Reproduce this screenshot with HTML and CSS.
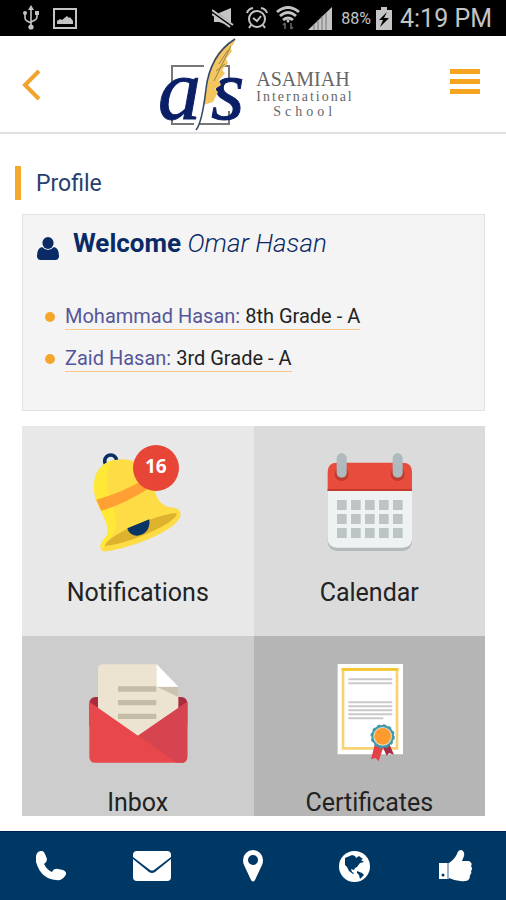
FILE: index.html
```html
<!DOCTYPE html>
<html lang="en">
<head>
  <meta charset="UTF-8">
  <meta name="viewport" content="width=device-width, initial-scale=1.0">
  <title>Asamiah International School</title>
  <link rel="stylesheet" href="styles.css">
</head>
<body>

<div class="status">
  <div class="status-left">
    <svg width="18" height="26" viewBox="0 0 18 26" fill="none" stroke="currentColor" stroke-width="1.6">
      <path d="M9 3v19M3 9v4q0 2 2 3l4 2M15 8v4q0 2-2 3l-4 2"/>
      <path d="M9 0l3 5H6zM13 6h4v4h-4z" fill="currentColor" stroke="none"/>
      <circle cx="3" cy="8" r="2" fill="currentColor" stroke="none"/>
      <circle cx="9" cy="22" r="2.6" fill="currentColor" stroke="none"/>
    </svg>
    <svg width="24" height="21" viewBox="0 0 24 21">
      <path d="M1 1h22v19H1z" fill="none" stroke="currentColor" stroke-width="2"/>
      <path d="M4 16v-3l3-2 2 1 5-4 2 2 1-1 3 4v3z" fill="currentColor"/>
    </svg>
  </div>
  <div class="status-right">
    <svg class="mute" width="22" height="20" viewBox="0 0 22 20">
      <path d="M2 5h5l12-5v18L7 14H2z" fill="currentColor"/>
      <path d="M0 3l20 15" stroke="#000" stroke-width="4"/>
      <path d="M0 2l21 15M0 6l18 13" stroke="currentColor" stroke-width="2"/>
    </svg>
    <svg width="22" height="22" viewBox="0 0 22 22" fill="none" stroke="currentColor" stroke-width="2">
      <circle cx="11" cy="12" r="8"/>
      <path d="M7 11l4 3 4-5M1 6q1-4 6-5M21 6q-1-4-6-5M5 18l-2 3M17 18l2 3"/>
    </svg>
    <svg width="24" height="24" viewBox="0 0 24 24" fill="none" stroke="currentColor" stroke-width="2.8">
      <path d="M1 6q11-9 22 0M4 10q8-7 16 0M7 14q5-4 10 0"/>
      <circle cx="12" cy="15" r="1.5" fill="currentColor" stroke="none"/>
      <path d="M9 23v-6M7 19l2-2M15 17v6M17 21l-2 2" stroke="#666" stroke-width="1.6"/>
    </svg>
    <svg width="25" height="23" viewBox="0 0 25 23">
      <path d="M0 23L24 0v23z" fill="currentColor"/>
      <path d="M6 17v6M10 13v10M14 9v14M18 6v17" stroke="#777" stroke-width="1"/>
    </svg>
    <span class="percent">88%</span>
    <svg width="16" height="23" viewBox="0 0 16 23">
      <path d="M0 3h5V0h6v3h5v20H0z" fill="currentColor"/>
      <path d="M11 5L3 13h4l-3 7 9-9H8z" fill="#000"/>
    </svg>
    <span class="clock">4:19 PM</span>
  </div>
</div>

<header class="header">
  <a class="back" href="#" aria-label="Back">
    <svg width="20" height="32" viewBox="0 0 20 32"><path d="M17 2L3 16l14 14" fill="none" stroke="currentColor" stroke-width="4"/></svg>
  </a>
  <div class="logo">
    <svg class="logo-mark" width="92" height="92" viewBox="0 0 92 92">
      <path d="M16 44V27h32M64 27h9v14M73 72v13H43M38 85H16v-5" fill="none" stroke="#777" stroke-width="2"/>
      <text x="2" y="80" class="logo-letter">a</text>
      <text x="55" y="80" class="logo-letter">s</text>
      <path d="M78 0Q58 12 54 33L47 66l10-3 5-10-3-3 6-4-2-5 6-7-3-3 6-7-2-4 6-8-2-4q5-3 5-8z" fill="#f3c65f"/>
      <path d="M79 0Q54 16 50 50T40 91" fill="none" stroke="#364a68" stroke-width="1.6"/>
      <path d="M75 7L58 42M72 11l-9 14M69 25l-9 7" fill="none" stroke="#9b8350" stroke-width="1"/>
    </svg>
    <div class="logo-text">
      <span class="logo-name">ASAMIAH</span>
      <span class="logo-inter">International</span>
      <span class="logo-school">School</span>
    </div>
  </div>
  <button class="menu" type="button" aria-label="Menu"><span></span><span></span><span></span></button>
</header>

<main class="content">
  <h1 class="section-title">Profile</h1>

  <section class="profile">
    <h2 class="welcome">
      <svg width="22" height="23" viewBox="0 0 22 23" fill="currentColor">
        <ellipse cx="11" cy="6" rx="5.6" ry="6"/>
        <path d="M5 10q6 6 12 0 5 1 5 9 0 4-4 4H4q-4 0-4-4 0-8 5-9z"/>
      </svg>
      <span><strong>Welcome</strong> <em>Omar Hasan</em></span>
    </h2>
    <ul class="children">
      <li><a href="#"><span>Mohammad Hasan:</span> 8th Grade - A</a></li>
      <li><a href="#"><span>Zaid Hasan:</span> 3rd Grade - A</a></li>
    </ul>
  </section>

  <nav class="tiles">
    <a class="tile tile-notifications" href="#">
      <span class="tile-icon">
        <svg width="120" height="110" viewBox="54 45 360 330">
          <circle cx="152" cy="93" r="18" fill="none" stroke="#092e64" stroke-width="11"/>
          <path d="M102 175C101 120 130 90 185 88C240 88 268 125 279 165C288 200 298 230 340 233C358 234 367 250 359 264C338 305 220 352 140 364C123 366 117 352 124 338C136 322 149 315 147 292C143 250 104 235 102 175Z" fill="#fddc45"/>
          <path d="M102 175C101 130 125 98 160 90C143 112 138 140 144 180C150 235 182 265 160 307C150 330 130 340 132 357C117 353 121 338 134 325C165 287 104 240 102 175Z" fill="#ffe936"/>
          <path d="M109 209Q180 190 250 150L272 171Q200 220 124 242Z" fill="#ff9f34"/>
          <path d="M134 348C143 310 320 244 350 250C354 279 192 347 134 348Z" fill="#dfb22d"/>
          <path d="M202 295L268 268C275 322 211 332 202 295Z" fill="#093564"/>
        </svg>
        <span class="badge">16</span>
      </span>
      <span class="tile-label">Notifications</span>
    </a>
    <a class="tile tile-calendar" href="#">
      <span class="tile-icon">
        <svg width="120" height="110" viewBox="28 45 360 330">
          <rect x="84" y="150" width="253" height="213" rx="28" fill="#b3b9bd"/>
          <path d="M84 180h253v145q0 28-28 28H112q-28 0-28-28z" fill="#eef2f3"/>
          <path d="M84 183v-57q0-28 28-28h197q28 0 28 28v57z" fill="#e84c3d"/>
          <path d="M84 177h253v6H84z" fill="#c43c30"/>
          <circle cx="126" cy="132" r="21" fill="#bf3c30"/>
          <circle cx="294" cy="132" r="21" fill="#bf3c30"/>
          <rect x="111" y="70" width="30" height="73" rx="15" fill="#aebabd"/>
          <rect x="279" y="70" width="30" height="73" rx="15" fill="#aebabd"/>
          <path d="M112 225h198M112 267h198M112 309h198" stroke="#bdc4c6" stroke-width="30" stroke-dasharray="29 13"/>
        </svg>
      </span>
      <span class="tile-label">Calendar</span>
    </a>
    <a class="tile tile-inbox" href="#">
      <span class="tile-icon">
        <svg width="120" height="110" viewBox="54 45 360 330">
          <rect x="88" y="171" width="294" height="100" rx="18" fill="#a92d3c"/>
          <path d="M114 88q0-15 15-15h161l65 67v150H114z" fill="#ece4d1"/>
          <path d="M290 140h65v31z" fill="#cbc3b0"/>
          <path d="M290 73l65 67h-65z" fill="#fff"/>
          <path d="M174 147h115M174 188h115M174 229h115" stroke="#c5bca7" stroke-width="16"/>
          <path d="M88 185l146 102 148-102v165q0 18-18 18H106q-18 0-18-18z" fill="#e8474b"/>
          <path d="M234 287l148-102v165q0 18-18 18h-15z" fill="#d64450"/>
        </svg>
      </span>
      <span class="tile-label">Inbox</span>
    </a>
    <a class="tile tile-certificates" href="#">
      <span class="tile-icon">
        <svg width="120" height="110" viewBox="28 45 360 330">
          <path d="M114 72h196v271H114z" fill="#fff"/>
          <path d="M130 88h162v237H130z" fill="none" stroke="#f9d273" stroke-width="8"/>
          <path d="M126 88h170" stroke="#f5c52e" stroke-width="8"/>
          <path d="M146 118h132M146 130h132M146 187h132M146 199h132M146 211h132M146 223h132M146 235h105" stroke="#c9c9cc" stroke-width="6"/>
          <path d="M225 315l-11 43 14-4 9 10 16-48z" fill="#e34348"/>
          <path d="M248 318l13 29 7-8 15 5-14-32z" fill="#a92d49"/>
          <circle cx="249" cy="289" r="31" fill="#e8dfbf" stroke="#3a9aae" stroke-width="6"/>
          <circle cx="249" cy="289" r="34" fill="none" stroke="#3a9aae" stroke-width="5" stroke-dasharray="9 8.8"/>
          <circle cx="249" cy="289" r="25" fill="#ff9b2e"/>
        </svg>
      </span>
      <span class="tile-label">Certificates</span>
    </a>
  </nav>
</main>

<footer class="footer">
  <a href="#" aria-label="Call">
    <svg width="30" height="30" viewBox="0 0 30 30"><path d="M2 1Q7-2 9 3l2 5q0 3-3 5 3 6 8 8 2-4 6-3l5 1q5 2 2 6-3 5-9 4Q5 28 0 11-1 4 2 1z"/></svg>
  </a>
  <a href="#" aria-label="Email">
    <svg width="38" height="30" viewBox="0 0 38 30"><path d="M4 0h30q4 0 4 4v2L21 19q-2 1-4 0L0 6V4q0-4 4-4z"/><path d="M0 8l16 13q3 2 6 0L38 8v18q0 4-4 4H4q-4 0-4-4z"/></svg>
  </a>
  <a href="#" aria-label="Location">
    <svg width="20" height="32" viewBox="0 0 20 32"><path d="M10 0a10 10 0 0 1 10 10q0 3-1 5l-7 15q-2 3-4 0L1 15q-1-2-1-5A10 10 0 0 1 10 0zm0 5a5 5 0 1 0 0 10 5 5 0 0 0 0-10z" fill-rule="evenodd"/></svg>
  </a>
  <a href="#" aria-label="Website">
    <svg width="31" height="31" viewBox="0 0 31 31"><circle cx="15.500" cy="15.500" r="15.500"/><path class="land" d="M6 7l7-3 3 1 1 2 3-2 4 3-2 1 3 2-4 1-3 4-2 1-1 2-3-1 1 3 2 1-1 1-4-3-2-4-2-2zM18 20l5 2 2 2-4 4-1-4-2-2z"/></svg>
  </a>
  <a href="#" aria-label="Like">
    <svg width="33" height="32" viewBox="0 0 33 32"><path d="M0 13h8v16H0zM10 13q5-3 8-9 1-4 4-4 4 1 3 6l-2 5h7q4 2 2 5 2 3 0 5 1 3-1 4 0 6-5 6-8 1-16-3z"/><path class="cuff" d="M9 13v16"/><circle class="land" cx="4" cy="25" r="1.5"/></svg>
  </a>
</footer>

</body>
</html>
```
FILE: styles.css
```css
* {
  box-sizing: border-box;
}
body {
  font-family: Roboto, sans-serif;
  margin: 0;
  height: 100vh;
  display: flex;
  flex-direction: column;
  background-color: #fff;
  color: #222;
}
a {
  color: inherit;
  text-decoration: none;
}
svg {
  display: block;
  flex: none;
}

/* Status bar */
.status {
  flex: none;
  height: 36px;
  padding: 0 14px 0 22px;
  display: flex;
  justify-content: space-between;
  align-items: center;
  background-color: #000;
  color: #c4c4c4;
}
.status-left {
  display: flex;
  align-items: center;
  gap: 13px;
}
.status-right {
  display: flex;
  align-items: center;
  gap: 8px;
}
.mute {
  margin-right: 4px;
}
.percent {
  font-size: 16px;
  margin-right: -3px;
}
.clock {
  font-size: 25px;
}

/* Header */
.header {
  flex: none;
  height: 98px;
  padding: 2px 26px 0 22px;
  display: grid;
  grid-template-columns: 1fr auto 1fr;
  align-items: center;
  border-bottom: 2px solid #e0e0e0;
}
.back {
  color: #f2a32b;
  justify-self: start;
}
.menu {
  justify-self: end;
  width: 30px;
  padding: 0;
  border: none;
  background: none;
  display: flex;
  flex-direction: column;
  gap: 5px;
  cursor: pointer;
  margin-bottom: 8px;
}
.menu span {
  height: 5px;
  background-color: #f4a41f;
}
.logo {
  display: flex;
  align-items: center;
  gap: 8px;
  padding-left: 8px;
}
.logo-mark {
  overflow: visible;
}
.logo-letter {
  font-family: "Liberation Serif", serif;
  font-style: italic;
  font-size: 86px;
  fill: #0a1f66;
  stroke: #0a1f66;
  stroke-width: 1px;
}
.logo-text {
  font-family: "Liberation Serif", serif;
  color: #666;
  display: flex;
  flex-direction: column;
  font-size: 14px;
  line-height: 15px;
  padding-top: 18px;
}
.logo-name {
  font-size: 20px;
  line-height: 19px;
}
.logo-inter {
  letter-spacing: 2px;
}
.logo-school {
  letter-spacing: 4px;
  padding-left: 17px;
}

/* Content */
.content {
  flex: 1;
  min-height: 0;
  overflow-y: auto;
  scrollbar-width: none;
  padding: 32px 21px 0 22px;
  margin-bottom: 15px;
}
.section-title {
  margin: 0 0 14px -7px;
  padding: 2px 0 0 15px;
  border-left: 6px solid #f4a92a;
  font-size: 23px;
  font-weight: normal;
  line-height: 32px;
  color: #28406e;
}
.profile {
  margin-bottom: 15px;
  padding: 10px 14px 30px;
  background-color: #f4f4f4;
  border: 1px solid #e2e2e2;
}
.welcome {
  display: flex;
  align-items: center;
  gap: 14px;
  margin: 0 0 35px;
  font-size: 26px;
  font-weight: normal;
  line-height: 36px;
  color: #0a2a66;
}
.welcome svg {
  margin-top: 10px;
}
.welcome strong {
  font-weight: bold;
}
.welcome em {
  font-weight: 300;
}
.children {
  list-style: none;
  margin: 0;
  padding: 0 0 0 8px;
}
.children li {
  display: flex;
  align-items: center;
  gap: 10px;
  height: 42px;
  font-size: 20px;
  line-height: 25px;
}
.children li::before {
  content: "";
  width: 10px;
  height: 10px;
  border-radius: 50%;
  background-color: #f6a62d;
}
.children a {
  border-bottom: 1px solid #fbc785;
}
.children span {
  color: #56569a;
}

/* Tiles */
.tiles {
  display: grid;
  grid-template-columns: 1fr 1fr;
}
.tile {
  min-height: 210px;
  padding-top: 19px;
  display: flex;
  flex-direction: column;
  align-items: center;
  gap: 23px;
}
.tile-notifications {
  background-color: #e8e8e8;
}
.tile-calendar {
  background-color: #dbdbdb;
}
.tile-inbox {
  background-color: #cdcdcd;
}
.tile-certificates {
  background-color: #b5b5b5;
}
.tile-icon {
  position: relative;
}
.tile-label {
  font-size: 25px;
  line-height: 30px;
}
.badge {
  position: absolute;
  top: 0;
  right: 19px;
  width: 46px;
  height: 46px;
  border-radius: 50%;
  background-color: #e74536;
  color: #fff;
  font-family: "Open Sans", sans-serif;
  font-size: 19px;
  font-weight: bold;
  line-height: 43px;
  text-align: center;
}

/* Footer */
.footer {
  flex: none;
  height: 69px;
  display: flex;
  align-items: center;
  background-color: #003865;
  border-top: 1px solid #001f52;
}
.footer a {
  flex: 1;
  display: flex;
  justify-content: center;
}
.footer svg {
  fill: #fff;
}
.footer .land {
  fill: #003865;
}
.footer .cuff {
  stroke: #9fb1c4;
  stroke-width: 2;
}
```
